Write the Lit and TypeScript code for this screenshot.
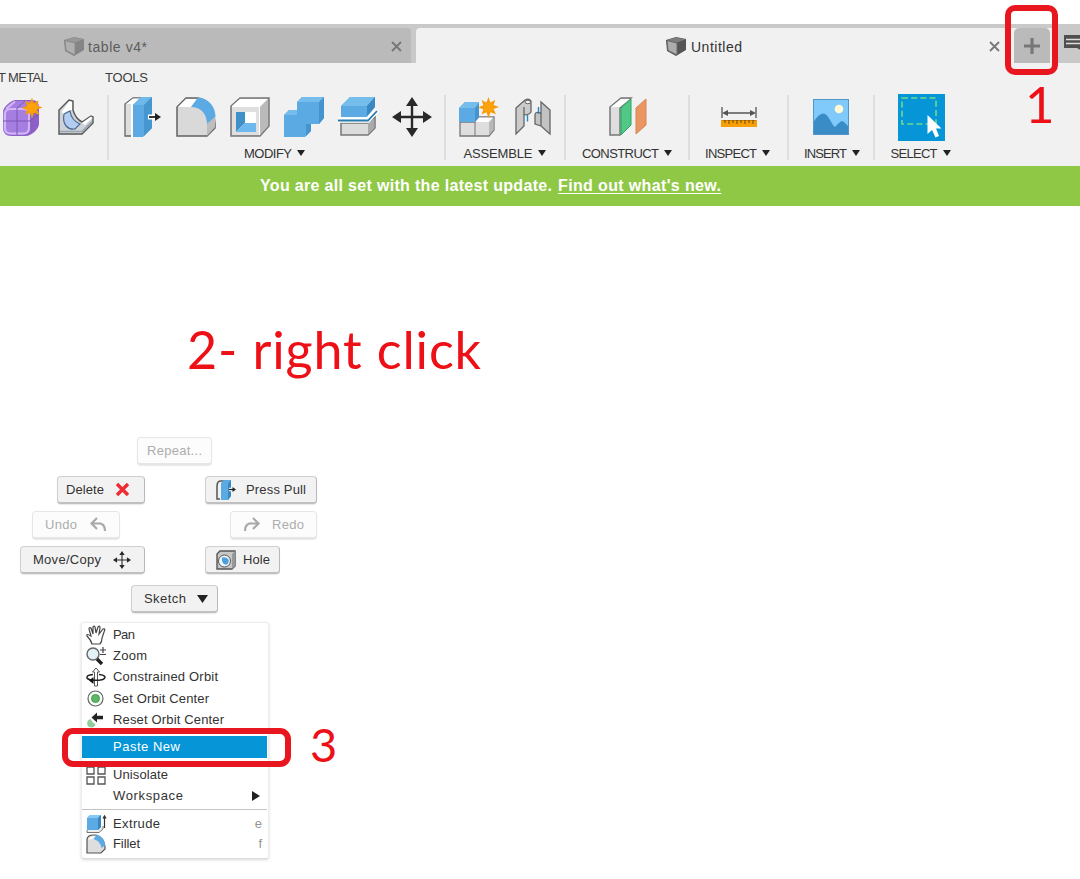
import { LitElement, html, css, svg, TemplateResult } from "lit";
import { customElement } from "lit/decorators.js";

const SANS = '"Liberation Sans", Arial, sans-serif';
const ctx = document.createElement("canvas").getContext("2d")!;

/** Renders a label whose tracking is adjusted so that it spans `width` pixels. */
function label(text: string, width: number, size = 13, weight = 400, family = SANS) {
  ctx.font = `${weight} ${size}px ${family}`;
  const n = Math.max(1, text.length - 1);
  const ls = text.length > 1 ? (width - ctx.measureText(text).width) / n : 0;
  return html`<span class="label" style="letter-spacing:${ls.toFixed(3)}px;width:${width}px">${text}</span>`;
}

const icon = (w: number, h: number, body: TemplateResult | unknown) =>
  html`<svg class="icon" width=${w} height=${h} viewBox="0 0 ${w} ${h}">${body}</svg>`;

const caret = icon(8, 6, svg`<path d="M0 0H8L4 6Z" fill="#222"/>`);

const star = svg`<path d="M0-10.500 1.800-5 6.800-7.500 5-2.500 10.500-.5 5 1.500 7.500 6.800 2 4.800 0 10.500-2 4.800-7 6.800-5 1.800-10.500 0-5-2.200-7-7.500-2-5Z" fill="#f79a08"/><circle r="4.800" fill="#fda30a"/>`;

const cube = (muted: boolean) => icon(20, 19, svg`
  <path d="M0 3 10 0 20 2 20 13 10 19 1 14Z" fill=${muted ? "#858585" : "#555"}/>
  <path d="M1 3.500 11 6V18L2 13.500Z" fill=${muted ? "#b0b0b0" : "#adadad"} stroke=${muted ? "#8a8a8a" : "#666"}/>
  <path d="M1 3 10 .5 19.500 2.500 11 5.500Z" fill=${muted ? "#989898" : "#7d7d7d"}/>`);

const arrows = svg`<path d="M20 5V35M5 20H35" stroke="#292929" stroke-width="2.400"/>
  <path d="M20 0 26 9H14ZM20 40 26 31H14ZM0 20 9 14V26ZM40 20 31 14V26Z" fill="#292929"/>`;

const pull = svg`<path d="M1 7 9 1H20L11 7V39H1Z" fill="#dedede" stroke="#666" stroke-width="1.300"/>
  <path d="M2 7 9 1.600H19L10 7Z" fill="#fff"/>
  <path d="M8 7V40" stroke="#fff" stroke-width="2"/>
  <path d="M9 8 17 0H28V31L19 40H9Z" fill="#5caae3"/><path d="M9 8 17 0H28L20 8Z" fill="#6fb8ea"/>
  <path d="M20 8 28 0V31L20 39Z" fill="#4596d1"/>
  <path d="M24 20H33" stroke="#fff" stroke-width="5"/><path d="M25 20H33" stroke="#222" stroke-width="1.800"/>
  <path d="M31 16 37 20 31 24Z" fill="#222"/>`;

const fillet = svg`<path d="M1 39V10L10 1H21C31 2 38 10 39 27V31L31 39Z" fill="#d9d9d9" stroke="#626262" stroke-width="1.500"/>
  <path d="M2 10 10 2H21L15 10Z" fill="#fff"/>
  <path d="M15 10 22 .5C33 1 40 11 39.500 20L31 27C31 17 25 10 15 10Z" fill="#5caae3"/>
  <path d="M31 27 39 20V30L31 39Z" fill="#bdbdbd"/>`;

const I = {
  form: icon(40, 40, svg`<path d="M1 15C1 10 9 3 14 3H30Q37 3 37 11V27C37 32 29 39 24 39H9Q1 39 1 30Z" fill="#8d60c8"/>
    <path d="M1 16Q2 11 9 11H22Q28 11 28 17V31Q28 38 21 38H9Q1 38 1 30Z" fill="#a67ee2"/>
    <path d="M4 10Q9 4 15 4H28Q33 5 29 8L24 11H5Z" fill="#a67ee2"/>
    <path d="M3 17Q3 12 9 12H21Q27 12 27 18V31Q27 36.500 21 36.500H9Q3 36.500 3 31ZM27 15 36 8M4 12 13 4.500" fill="none" stroke="#d3b6f8" stroke-width="2"/>
    <path d="M15 11V38M1 24H28L37 17M15 11 23 4" fill="none" stroke="#7a55b4" stroke-width="1"/>
    <g transform="translate(30 11)">${star}</g>`),
  flange: icon(36, 36, svg`<path d="M1 35V11L11 1L15 2V11C17 18 20 21 24 23L33 17L35 18V24L24 35Z" fill="#cfd3d8" stroke="#555" stroke-width="1.400"/>
    <path d="M4 12 11.500 2 14 3V11L8 13 5 16Z" fill="#fff"/><path d="M24 24 33 17.500 34.500 19 27 26Z" fill="#fff"/>
    <path d="M6 15 12 12C13 19 17 23 22 25L17 30C10 31 4 26 6 15Z" fill="#b3cdf0" stroke="#4b6991" stroke-width="1.200"/>
    <path d="M2 32.500H24L34 22.500" fill="none" stroke="#9aa5b3" stroke-width="1.500"/>`),
  pull: icon(38, 40, pull),
  fillet: icon(40, 40, fillet),
  shell: icon(40, 40, svg`<path d="M1 39V9L10 1H39V29L30 39Z" fill="#c4c4c4" stroke="#777" stroke-width="1.500"/>
    <path d="M2 9 10 2H38L30 10V38H2Z" fill="#fff"/><path d="M2 10H29V38H2Z" fill="#dfdfdf"/><path d="M30 10 38 2V29L30 38Z" fill="#bababa"/>
    <rect x="6" y="15" width="20" height="20" fill="#fff"/><path d="M6 15H15V26L6 35Z" fill="#3f8fc9"/><path d="M15 26H26V35H6Z" fill="#6db8ec"/>`),
  combine: icon(40, 40, svg`<path d="M0 18 5 13H13V5L18 0H40V21L35 27H27V34L21 40H0Z" fill="#5caae3"/>
    <path d="M0 18 5 13H13V17L12 18ZM13 5 18 0H40L35 5Z" fill="#74bdec"/><path d="M35 5 40 0V21L35 27ZM22 27H27V34L22 39Z" fill="#4594cf"/>`),
  split: icon(40, 40, svg`<path d="M3 9 12 0H37V10L29 20H3Z" fill="#5caae3"/><path d="M3 9 12 0H37L29 9Z" fill="#75beec"/><path d="M29 9 37 0V10L29 19Z" fill="#3c88c2"/>
    <path d="M3 26H30L37 20V31L30 38H3Z" fill="#dcdcdc" stroke="#777" stroke-width="1.500"/><path d="M30 27 36 22V31L30 37Z" fill="#aaa"/>
    <path d="M0 23H30L39 13" fill="none" stroke="#fff" stroke-width="5.500"/><path d="M0 23.500H30L39 14" fill="none" stroke="#287bad" stroke-width="1.800"/>`),
  move: icon(40, 40, arrows),
  component: icon(40, 40, svg`<path d="M1 25H16L20 20H35V33L30 39H1Z" fill="#dedede" stroke="#777" stroke-width="1.300"/>
    <path d="M16 25 20 20.500H34L30 25Z" fill="#fff"/><path d="M30 25 34.500 20.500V33L30 38Z" fill="#b8b8b8"/><path d="M16 25V39" stroke="#777"/>
    <path d="M0 11 6 5H20V19L16 25H0Z" fill="#5caae3"/><path d="M0 11 6 5H20L16 11Z" fill="#75beec"/><path d="M16 11 20 6V20L16 25Z" fill="#4594cf"/>
    <g transform="translate(29.500 10.500)">${star}</g>`),
  joint: icon(36, 38, svg`<g stroke="#666" stroke-width="1.300"><path d="M1 10 10 2Q14 0 16 3V14Q14 17 9 17V28L1 36Z" fill="#cbcbcb"/>
    <path d="M35 12 26 4V15Q20 13 20 17V26L26 28 35 36Z" fill="#c3c3c3"/><path d="M26 15V28M9 17V9" fill="none"/></g>
    <ellipse cx="12.800" cy="4" rx="2.800" ry="1.700" fill="#f4f4f4" stroke="#666"/><path d="M12.500 17V23.500M23.500 9V16" stroke="#238bc5" stroke-width="1.400"/>`),
  plane: icon(40, 40, svg`<path d="M1 38V10L12 1H22L11 11V38Z" fill="#dedede" stroke="#777" stroke-width="1.500"/><path d="M2 10 12 2H21L11 10Z" fill="#fff"/>
    <path d="M12 11 22 2V28L12 38Z" fill="#52c886" stroke="#28a866"/><path d="M27 11 37 2V28L27 37Z" fill="#e99662" stroke="#d98450"/>`),
  ruler: icon(36, 20, svg`<path d="M1 0V11M35 0V11M3 6H33" stroke="#555" stroke-width="1.300"/><path d="M1 6 7 3V9ZM35 6 29 3V9Z" fill="#555"/>
    <rect y="13" width="36" height="7" fill="#f6a006"/><path d="M1 13.500H35" stroke="#c67d00"/><path d="M4 13V16M8 13V17M12 13V16M16 13V17M20 13V16M24 13V17M28 13V16M32 13V17" stroke="#6d4800"/>`),
  picture: icon(36, 36, svg`<rect width="36" height="36" fill="#80c9fb"/><path d="M0 24C4 17 9 13 12 15 16 17 19 26 22 28 26 24 28 21 31 23L36 28V36H0Z" fill="#3a8cc7"/>
    <circle cx="26" cy="10" r="4.300" fill="#fffad2"/><rect x=".5" y=".5" width="35" height="35" fill="none" stroke="#5197c9"/>`),
  select: icon(47, 47, svg`<rect width="47" height="47" fill="#0696d7"/><path d="M4 4H38V30H4Z" fill="none" stroke="#6edb8b" stroke-width="1.600" stroke-dasharray="6 3.200"/>
    <path d="M29.500 21V40L34 36 37.500 43.500 41 42 38 34.500H43.500Z" fill="#fff"/>`),
};

const S = {
  cross: icon(15, 15, svg`<path d="M2 2 13 13M13 2 2 13" stroke="#f02c33" stroke-width="3.400"/>`),
  pull: icon(20, 20, svg`<path d="M8 1H5Q1 1 1 6V19H4" fill="none" stroke="#555" stroke-width="1.500"/><path d="M5 3 8 0H15V16L12 20H5Z" fill="#5caae3"/><path d="M12 4 15 0V16L12 20Z" fill="#3a87c0"/><path d="M13 9.500H17" stroke="#fff" stroke-width="3.500"/><path d="M13 9.500H18" stroke="#222" stroke-width="1.300"/><path d="M16.500 7 20 9.500 16.500 12Z" fill="#222"/>`),
  undo: icon(17, 15, svg`<path d="M7 1 1.500 6.500 7 12M2 6.500H8Q15 6 15 14" fill="none" stroke="#aaa" stroke-width="2.200"/>`),
  redo: icon(17, 15, svg`<path d="M10 1 15.500 6.500 10 12M15 6.500H9Q2 6 2 14" fill="none" stroke="#aaa" stroke-width="2.200"/>`),
  move: html`<svg class="icon" width="18" height="18" viewBox="0 0 40 40">${arrows}</svg>`,
  hole: icon(20, 20, svg`<path d="M1 4 4 1H19V16L16 19H1Z" fill="#c7c7c7" stroke="#555" stroke-width="1.400"/><path d="M16 4 19 1V16L16 19Z" fill="#999"/>
    <circle cx="8.500" cy="11" r="6" fill="#eef6fc" stroke="#555"/><path d="M6 7.500Q11 6.500 12.800 10 13 14 9.500 14.800Q5 13 6 7.500Z" fill="#4f9fda"/>`),
  down: icon(11, 8, svg`<path d="M0 0H11L5.500 8Z" fill="#222"/>`),
};

const M: Record<string, TemplateResult> = {
  pan: icon(20, 20, svg`<path d="M6 19Q5 15 1 11Q0 8 5 11L3 4Q3 2 5 3L7 9 7 2Q8 0 9 2L10 8 12 2Q14 0 14 3L13 9 17 4Q20 3 18 7L16 13Q16 17 14 19Z" fill="#fff" stroke="#444" stroke-width="1.200"/>`),
  zoom: icon(20, 20, svg`<circle cx="7" cy="8" r="6" fill="#e3f1f8" stroke="#666" stroke-width="1.400"/><path d="M11 13 16 18" stroke="#222" stroke-width="3.400"/><path d="M14 4H20M17 1V7M14 8.500H20" stroke="#444" stroke-width="1.200"/>`),
  orbit: icon(20, 20, svg`<path d="M8.500 19V5H6.500L10 1 13.500 5H11.500V19Z" fill="#fff" stroke="#555"/><path d="M7 7.500Q0 8 1 11 3 14 15 13M13 7.500Q19 8 19 10.500 18 13 14 13" fill="none" stroke="#222" stroke-width="1.500"/><path d="M3 13.500 7.500 10V17Z" fill="#111"/>`),
  center: icon(20, 20, svg`<circle cx="9.500" cy="9.500" r="7.500" fill="#f5fff5" stroke="#666" stroke-width="1.200"/><circle cx="9.500" cy="9.500" r="4" fill="#5cb868" stroke="#4a9a55"/>`),
  reset: icon(20, 20, svg`<path d="M5 9A4.200 4.200 0 1 0 9.500 14Q6 13 5 9Z" fill="#8fce9a"/><path d="M5.500 7.500 11 2.500V5.700H17V9.300H11V12.500Z" fill="#222"/>`),
  unisolate: icon(20, 20, svg`<path d="M1 2H8V9H1ZM12 2H19V9H12ZM1 12H8V19H1ZM12 12H19V19H12Z" fill="#fff" stroke="#555" stroke-width="1.300"/>`),
  extrude: icon(21, 20, svg`<path d="M1 16V18.500H13L17 15V12" fill="#eee" stroke="#777"/><path d="M1 4 4 1H15V13L12 16H1Z" fill="#5caae3"/><path d="M1 4 4 1H15L12 4Z" fill="#83c9f3"/><path d="M12 4 15 1V13L12 16Z" fill="#3a86be"/><path d="M18.500 14V3M17 4.500 18.500 2 20 4.500" stroke="#333" fill="none" stroke-width="1.200"/>`),
  fillet: icon(20, 20, svg`<path d="M1 19V5Q2 1 7 1H10Q18 3 19 13V15L15 19Z" fill="#dedede" stroke="#555" stroke-width="1.200"/><path d="M2 5.500Q4 2 9 2L7 5Z" fill="#fff"/><path d="M7.500 5 11 .8Q18 3 19.500 11L15.500 14Q14 6.500 7.500 5Z" fill="#5caae3"/>`),
};

interface Entry { text: string; width: number; icon?: string; key?: string; cls?: string; sub?: boolean }
const entries: Entry[] = [
  { text: "Pan", width: 22, icon: "pan" },
  { text: "Zoom", width: 34, icon: "zoom" },
  { text: "Constrained Orbit", width: 105, icon: "orbit" },
  { text: "Set Orbit Center", width: 96, icon: "center" },
  { text: "Reset Orbit Center", width: 111, icon: "reset" },
  { text: "Paste New", width: 67, cls: "hot" },
  { text: "Unisolate", width: 55, icon: "unisolate" },
  { text: "Workspace", width: 70, sub: true },
  { text: "Extrude", width: 47, icon: "extrude", key: "e", cls: "ruled" },
  { text: "Fillet", width: 27, icon: "fillet", key: "f" },
];

@customElement("app-root")
export class AppRoot extends LitElement {
  static styles = css`
    :host { display: block; position: relative; height: 879px; overflow: hidden; background: #fff;
      font: 13px/16px "Liberation Sans", Arial, sans-serif; color: #333; }
    * { box-sizing: border-box; }
    .icon { display: block; flex: none; overflow: visible; }
    .label { display: block; white-space: pre; flex: none; }
    .top { height: 24px; }
    .tabs { display: flex; height: 39px; background: #c9c9c9; padding-top: 4px; }
    .tab { display: flex; align-items: center; font-size: 14px; height: 35px; padding-top: 1px; }
    .tab.old { width: 411px; background: #bababa; color: #5d5d5d; padding-right: 9px; padding-left: 64px; margin-right: 5px; border-radius: 0 3px 0 0; gap: 4px; }
    .tab.now { width: 594px; background: #f1f1f1; padding-right: 10px; padding-left: 250px; gap: 5px; border-radius: 4px 0 0 0; }
    .tab .label { margin-top: 1px; }
    .spacer { flex: 1; }
    .plus { width: 48px; display: flex; background: #f1f1f1; margin-left: -1px; padding-left: 5px; }
    .plus-in { width: 36px; height: 35px; border-radius: 5px 5px 0 0; background: #bababa; display: grid; place-items: center; }
    .comments { padding: 7px 0 0 7px; width: 23px; overflow: hidden; }
    .ribbon { height: 103px; background: #f1f1f1; padding-top: 7px; }
    .heads { display: flex; height: 16px; gap: 57px; margin-left: -2px; font-size: 13px; color: #3d3d3d; }
    .groups { display: flex; margin-top: 1px; }
    .group { display: flex; flex-direction: column; align-items: center; height: 75px; position: relative; }
    .group::after { content: ""; position: absolute; right: -1px; top: 8px; width: 2px; height: 65px; background: #dedede; }
    .group:last-child::after { display: none; }
    .g0 { width: 108px; align-items: flex-start; padding-left: 2px; } .g0 .tools { gap: 16px; }
    .g1 { width: 337px; } .g1 .tools { gap: 14px; margin-left: 2px; } .g1 .caption { margin-left: -4px; }
    .g2 { width: 120px; } .g2 .tools { gap: 16px; } .g2 .caption { margin-left: -1px; }
    .g3 { width: 124px; } .g3 .tools { margin-left: 3px; }
    .g4 { width: 99px; } .g4 .caption { margin-left: -2px; }
    .g5 { width: 86px; } .g5 .caption { margin-left: 2px; }
    .g6 { width: 92px; } .g6 .tools { margin-left: 2px; padding-top: 4px; } .g6 .caption { margin-left: 1px; }
    .tools { display: flex; align-items: center; height: 57px; padding-top: 2px; }
    .caption { display: flex; align-items: center; gap: 5px; height: 16px; margin-top: 2px; }
    .caption .icon { margin-top: -2px; }
    .banner { height: 40px; background: #8fc845; color: #fff; display: flex; align-items: center; padding: 0 0 1px 260px; gap: 6px; font-size: 16px; font-weight: 700; }
    .link { text-decoration: underline; text-underline-offset: 2px; text-decoration-thickness: 1px; height: 16px; line-height: 16px; }
    .btn { position: absolute; height: 28px; display: flex; align-items: center; justify-content: space-between;
      border: 1px solid #cfcfcf; border-bottom: 2px solid #c0c0c0; border-right-color: #b9b9b9; border-radius: 4px; background: #f2f2f2; box-shadow: 0 1px 1px #e9e9e9; }
    .off { color: #adadad; background: #fcfcfc; border-color: #e6e6e6; }
    .repeat { left: 137px; top: 437px; width: 75px; padding: 0 9px; }
    .delete { left: 57px; top: 476px; width: 88px; padding: 0 14px 0 8px; }
    .press { left: 205px; top: 476px; width: 112px; padding: 0 10px; }
    .undo { left: 32px; top: 511px; width: 88px; padding: 0 12px; }
    .redo { left: 230px; top: 511px; width: 87px; padding: 0 12px; }
    .move { left: 20px; top: 546px; width: 125px; padding: 0 13px 0 12px; }
    .hole { left: 205px; top: 546px; width: 75px; padding: 0 9px 0 10px; }
    .sketch { left: 131px; top: 585px; width: 87px; padding: 0 9px 0 12px; }
    .menu { position: absolute; left: 81px; top: 622px; width: 188px; height: 237px; padding: 1px 1px 0 0; background: #fff;
      border: 1px solid #eee; border-bottom-color: #ddd; border-radius: 3px; box-shadow: 0 1px 3px #d8d8d8; }
    .row { display: flex; align-items: center; height: 21.300px; padding: 0 5px 0 4px; gap: 7px; }
    .slot { width: 20px; flex: none; }
    .key { color: #949494; }
    .hot { background: #0696d7; color: #fff; margin: 6px 0 5.500px; height: 22px; }
    .ruled { margin-top: 2px; border-top: 1px solid #c4c4c4; padding-top: 4px; height: 25px; }
    .ring { position: absolute; border: 6px solid #e8161e; }
    .ring1 { left: 1005px; top: 5px; width: 53px; height: 70px; border-radius: 10px; }
    .ring3 { left: 62px; top: 728px; width: 229px; height: 39px; border-radius: 11px; }
    .note { position: absolute; color: #ed1016; font-family: Lato, Carlito, sans-serif; font-size: 52px; line-height: 60px; }
    .n1 { left: 1025px; top: 74px; font-size: 51px; } .n2 { left: 187px; top: 319px; } .n3 { left: 310px; top: 714px; font-size: 47px; }
  `;

  private group(n: number, tools: unknown[], name?: string, width = 0) {
    return html`<div class="group g${n}"><div class="tools">${tools}</div>
      ${name ? html`<div class="caption">${label(name, width)}${caret}</div>` : ""}</div>`;
  }

  render() {
    const close = icon(11, 11, svg`<path d="M1 1 10 10M10 1 1 10" stroke="#777" stroke-width="1.800"/>`);
    return html`
      <div class="top"></div>
      <div class="tabs">
        <div class="tab old">${cube(true)}${label("table v4*", 59, 14)}<span class="spacer"></span>${close}</div>
        <div class="tab now">${cube(false)}${label("Untitled", 51, 14)}<span class="spacer"></span>${close}</div>
        <div class="plus"><div class="plus-in">${icon(16, 16, svg`<path d="M8 0V16M0 8H16" stroke="#777" stroke-width="3.200"/>`)}</div></div>
        <div class="comments">${icon(22, 18, svg`<path d="M0 0H22V18L13 13H0Z" fill="#4f4f4f"/><path d="M2 4.500H22M2 8.500H22" stroke="#ddd" stroke-width="1.500"/>`)}</div>
      </div>
      <div class="ribbon">
        <div class="heads">${label("T METAL", 50)}${label("TOOLS", 43)}</div>
        <div class="groups">
          ${this.group(0, [I.form, I.flange])}
          ${this.group(1, [I.pull, I.fillet, I.shell, I.combine, I.split, I.move], "MODIFY", 48)}
          ${this.group(2, [I.component, I.joint], "ASSEMBLE", 69)}
          ${this.group(3, [I.plane], "CONSTRUCT", 77)}
          ${this.group(4, [I.ruler], "INSPECT", 52)}
          ${this.group(5, [I.picture], "INSERT", 43)}
          ${this.group(6, [I.select], "SELECT", 47)}
        </div>
      </div>
      <div class="banner">${label("You are all set with the latest update.", 292, 16, 700)}<span class="link">${label("Find out what's new.", 163, 16, 700)}</span></div>

      <div class="btn off repeat">${label("Repeat...", 55)}</div>
      <div class="btn delete">${label("Delete", 38)}${S.cross}</div>
      <div class="btn press">${S.pull}${label("Press Pull", 60)}</div>
      <div class="btn off undo">${label("Undo", 32)}${S.undo}</div>
      <div class="btn off redo">${S.redo}${label("Redo", 32)}</div>
      <div class="btn move">${label("Move/Copy", 68)}${S.move}</div>
      <div class="btn hole">${S.hole}${label("Hole", 27)}</div>
      <div class="btn sketch">${label("Sketch", 42)}${S.down}</div>

      <div class="menu">
        ${entries.map((e) => html`<div class="row ${e.cls ?? ""}">
          <span class="slot">${e.icon ? M[e.icon] : ""}</span>${label(e.text, e.width)}<span class="spacer"></span>
          ${e.key ? html`<span class="key">${e.key}</span>` : ""}
          ${e.sub ? icon(11, 10, svg`<path d="M1 0 9 5 1 10Z" fill="#222"/>`) : ""}
        </div>`)}
      </div>

      <div class="ring ring1"></div>
      <div class="ring ring3"></div>
      <div class="note n1">1</div>
      <div class="note n2">${label("2- right click", 294, 52, 400, "Lato")}</div>
      <div class="note n3">3</div>
    `;
  }
}
